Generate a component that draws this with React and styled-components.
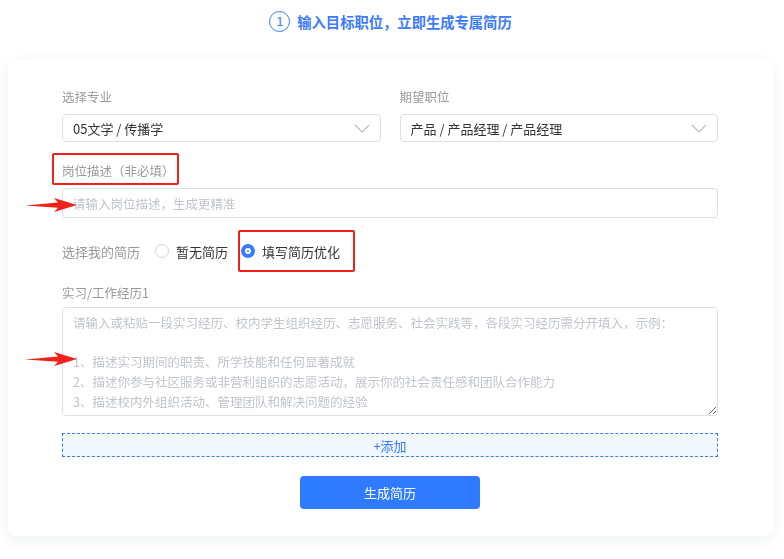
import React from 'react'
import styled, { createGlobalStyle } from 'styled-components';

const GlobalStyle = createGlobalStyle`
    body {
        margin: 0;
        background: #fff;
        font-family: "Noto Sans CJK SC", "Noto Sans", sans-serif;
    }
`;

const Arrow = () => (
    <svg width="52" height="14" viewBox="0 0 52 14">
        <polygon points="0,7.5 33,4.5 29,0 52,7 29,14 33,9.8" fill="#f0201a"/>
    </svg>
);

const Chevron = () => (
    <svg width="16" height="9" viewBox="0 0 16 9">
        <polyline points="1,1 8,8 15,1" fill="none" stroke="#b8b8b8" strokeWidth="1.1"/>
    </svg>
);

const App = () => {
    return (
        <Page>
            <GlobalStyle/>
            <Header>
                <StepNum>1</StepNum>
                <Title>输入目标职位，立即生成专属简历</Title>
            </Header>
            <Card>
                <Row>
                    <Field>
                        <Label>选择专业</Label>
                        <Select>
                            <span>05文学 / 传播学</span>
                            <Chevron/>
                        </Select>
                    </Field>
                    <Field>
                        <Label>期望职位</Label>
                        <Select>
                            <span>产品 / 产品经理 / 产品经理</span>
                            <Chevron/>
                        </Select>
                    </Field>
                </Row>
                <Label $top={20}>岗位描述（非必填）</Label>
                <Input placeholder="请输入岗位描述，生成更精准"/>
                <RadioRow>
                    <RadioLabel>选择我的简历</RadioLabel>
                    <RadioItem><Radio/>暂无简历</RadioItem>
                    <RadioItem><Radio $checked/>填写简历优化</RadioItem>
                </RadioRow>
                <Label $top={23} $bottom={5}>实习/工作经历1</Label>
                <TextArea placeholder={"请输入或粘贴一段实习经历、校内学生组织经历、志愿服务、社会实践等，各段实习经历需分开填入，示例：\n\n1、描述实习期间的职责、所学技能和任何显著成就\n2、描述你参与社区服务或非营利组织的志愿活动，展示你的社会责任感和团队合作能力\n3、描述校内外组织活动、管理团队和解决问题的经验"}/>
                <AddBox>+添加</AddBox>
                <Submit>生成简历</Submit>

                <RedBox $left={44} $top={93} $w={127} $h={32}/>
                <RedBox $left={230} $top={170} $w={117} $h={42}/>
                <ArrowMark $top={138}><Arrow/></ArrowMark>
                <ArrowMark $top={292}><Arrow/></ArrowMark>
            </Card>
        </Page>
    )
}

const Page = styled.div`
    padding: 0 11px 23px 8px;
`;

const Header = styled.div`
    height: 60px;
    display: flex;
    align-items: center;
    justify-content: center;
    gap: 7px;
    box-sizing: border-box;
    padding-bottom: 18px;
`;

const StepNum = styled.div`
    width: 19px;
    height: 19px;
    border: 1.3px solid #3a7afe;
    border-radius: 50%;
    color: #3a7afe;
    font-size: 13px;
    display: flex;
    align-items: center;
    justify-content: center;
    font-family: "Liberation Sans", sans-serif;
`;

const Title = styled.div`
    color: #3a7afe;
    font-size: 14.3px;
    font-weight: bold;
`;

const Card = styled.div`
    position: relative;
    background: #fff;
    border-radius: 8px;
    box-shadow: 0 3px 14px rgba(40, 70, 90, 0.08);
    padding: 28px 55px 27px 54px;
`;

const Row = styled.div`
    display: grid;
    grid-template-columns: 1fr 1fr;
    gap: 19px;
`;

const Field = styled.div`
    display: flex;
    flex-direction: column;
`;

const Label = styled.div`
    font-size: 12.5px;
    line-height: 18px;
    color: #999;
    margin-top: ${p => p.$top || 0}px;
    margin-bottom: ${p => p.$bottom ?? 8}px;
`;

const Select = styled.div`
    height: 28px;
    border: 1px solid #dcdfe6;
    border-radius: 4px;
    display: flex;
    align-items: center;
    justify-content: space-between;
    padding: 0 10px 0 10px;
    box-sizing: border-box;
    font-size: 13px;
    color: #333;
`;

const Input = styled.input`
    display: block;
    width: 100%;
    height: 30px;
    box-sizing: border-box;
    border: 1px solid #dcdfe6;
    border-radius: 4px;
    padding: 0 10px;
    font-size: 12.5px;
    font-family: inherit;
    outline: none;
    &::placeholder { color: #c0c4cc; }
`;

const RadioRow = styled.div`
    display: flex;
    align-items: center;
    height: 20px;
    margin-top: 23px;
    font-size: 13px;
`;

const RadioLabel = styled.span`
    color: #999;
    margin-right: 15px;
`;

const RadioItem = styled.span`
    display: flex;
    align-items: center;
    gap: 7px;
    color: #333;
    margin-right: 13px;
`;

const Radio = styled.span`
    width: 14px;
    height: 14px;
    box-sizing: border-box;
    border-radius: 50%;
    border: ${p => p.$checked ? '4px solid #3a7afe' : '1px solid #d4d4d4'};
    background: #fff;
    display: inline-block;
    position: relative;
    &::after {
        content: '';
        display: ${p => p.$checked ? 'block' : 'none'};
        position: absolute;
        inset: 0;
        margin: auto;
        width: 2px;
        height: 2px;
        border-radius: 50%;
        background: #3a7afe;
    }
`;

const TextArea = styled.textarea`
    display: block;
    width: 100%;
    height: 109px;
    box-sizing: border-box;
    border: 1px solid #dcdfe6;
    border-radius: 4px;
    padding: 5px 10px;
    font-size: 12.5px;
    line-height: 19.7px;
    font-family: inherit;
    outline: none;
    &::placeholder { color: #c0c4cc; }
`;

const AddBox = styled.div`
    margin-top: 17px;
    height: 24px;
    box-sizing: border-box;
    border: 1px dashed #3a7afe;
    background: #f0f7ff;
    color: #3a7afe;
    font-size: 13px;
    display: flex;
    align-items: center;
    justify-content: center;
`;

const Submit = styled.button`
    display: block;
    margin: 19px auto 0;
    width: 180px;
    height: 33px;
    border: none;
    border-radius: 4px;
    background: #2f7bff;
    color: #fff;
    font-size: 13px;
    font-family: inherit;
`;

const RedBox = styled.div`
    position: absolute;
    left: ${p => p.$left}px;
    top: ${p => p.$top}px;
    width: ${p => p.$w}px;
    height: ${p => p.$h}px;
    box-sizing: border-box;
    border: 2px solid #f0201a;
    border-radius: 2px;
`;

const ArrowMark = styled.div`
    position: absolute;
    left: 17px;
    top: ${p => p.$top}px;
    line-height: 0;
`;

export default App
